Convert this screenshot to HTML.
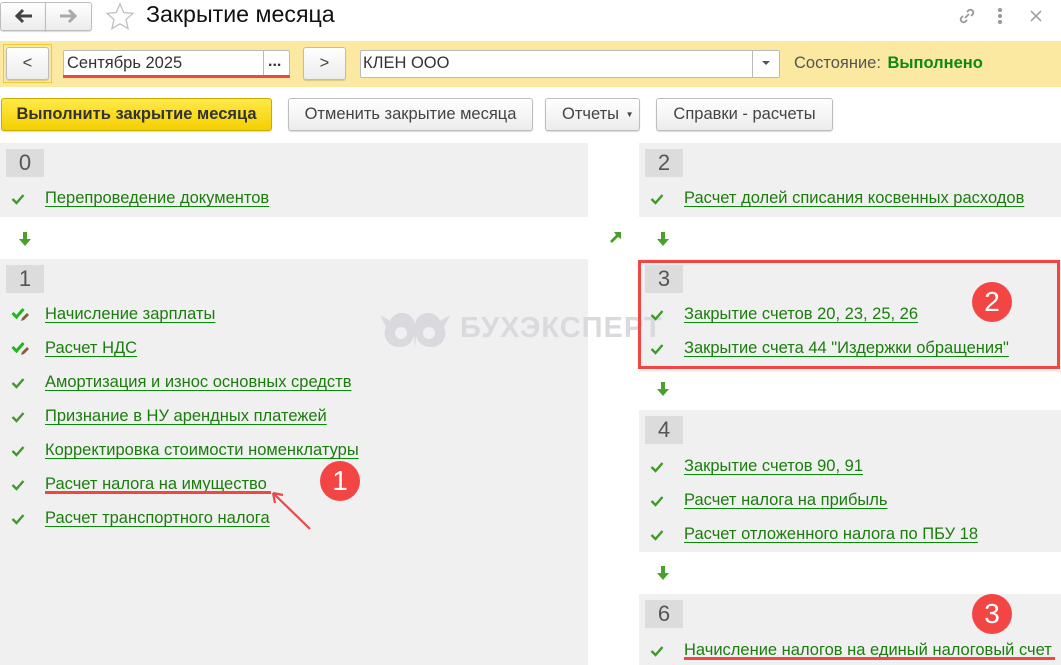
<!DOCTYPE html>
<html><head><meta charset="utf-8"><style>
*{box-sizing:border-box;margin:0;padding:0}
body{width:1061px;height:665px;background:#fff;font-family:"Liberation Sans",Arial,sans-serif;position:relative;overflow:hidden;color:#333}
.a{position:absolute}
.btn{position:absolute;border:1px solid #bdbdbd;border-radius:3px;background:linear-gradient(#fff,#ececec);box-shadow:0 1px 1px rgba(0,0,0,.15);font-size:16.5px;color:#444;text-align:center;white-space:nowrap}
.gray{position:absolute;background:#f0f0f0}
.num{position:absolute;width:38px;height:28px;background:#dcdcdc;color:#555;font-size:22px;line-height:28px;text-align:center}
.lk{position:absolute;font-size:16.5px;color:#1b7d0e;text-decoration:underline;text-decoration-color:#0a8a0a;text-underline-offset:3px;white-space:nowrap;line-height:19px}
.ck{position:absolute;width:14px;height:12px}
.arr{position:absolute;width:12px;height:14px}
.badge{position:absolute;width:40px;height:40px;border-radius:50%;background:#f44545;color:#fff;font-size:28px;line-height:40px;text-align:center}
</style></head><body>

<div class="btn" style="left:0;top:2px;width:46px;height:29px;border-radius:3px 0 0 3px"></div>
<div class="btn" style="left:45px;top:2px;width:47px;height:29px;border-radius:0 3px 3px 0"></div>
<svg class="a" style="left:14px;top:8px" width="20" height="16"><path d="M2 8h16M9 2L3 8l6 6" stroke="#444" stroke-width="3" fill="none"/></svg>
<svg class="a" style="left:58px;top:8px" width="20" height="16"><path d="M2 8h16M11 2l6 6-6 6" stroke="#aaa" stroke-width="3" fill="none"/></svg>
<svg class="a" style="left:105px;top:2px" width="30" height="28"><path d="M15 2l3.8 8.6 9.2.8-7 6.1 2.1 9.1L15 21.8 6.9 26.6 9 17.5 2 11.4l9.2-.8z" fill="none" stroke="#bbb" stroke-width="1.2"/></svg>
<div class="a" style="left:146px;top:1px;font-size:23.2px;color:#111">Закрытие месяца</div>
<svg class="a" style="left:956px;top:5px" width="22" height="22"><g fill="none" stroke="#999" stroke-width="1.8"><path d="M9 13l4-4"/><path d="M7 11l-2 2a3 3 0 004 4l2-2"/><path d="M15 11l2-2a3 3 0 00-4-4l-2 2"/></g></svg>
<svg class="a" style="left:997px;top:7px" width="6" height="18"><circle cx="3" cy="3" r="2" fill="#999"/><circle cx="3" cy="9" r="2" fill="#999"/><circle cx="3" cy="15" r="2" fill="#999"/></svg>
<svg class="a" style="left:1030px;top:10px" width="12" height="12"><path d="M1 1l10 10M11 1L1 11" stroke="#999" stroke-width="1.5"/></svg>

<div class="a" style="left:0;top:41px;width:1061px;height:46px;background:#fbe9a2"></div>
<div class="a" style="left:3px;top:44px;width:49px;height:39px;border:1px solid #f4c830"></div>
<div class="btn" style="left:6px;top:47px;width:43px;height:33px;line-height:30px">&lt;</div>
<div class="a" style="left:63px;top:50px;width:227px;height:28px;background:#fff;border:1px solid #bbb;border-radius:2px"></div>
<div class="a" style="left:263px;top:50px;width:1px;height:28px;background:#bbb"></div>
<div class="a" style="left:67px;top:54px;font-size:16.5px;color:#333">Сентябрь 2025</div>
<div class="a" style="left:268px;top:53px;font-size:16px;color:#333;font-weight:bold">...</div>
<div class="a" style="left:63px;top:75px;width:227px;height:3px;background:#f44545"></div>
<div class="btn" style="left:303px;top:47px;width:43px;height:33px;line-height:30px">&gt;</div>
<div class="a" style="left:360px;top:50px;width:420px;height:28px;background:#fff;border:1px solid #bbb;border-radius:2px"></div>
<div class="a" style="left:752px;top:50px;width:1px;height:28px;background:#bbb"></div>
<div class="a" style="left:363px;top:54px;font-size:16.5px;color:#333">КЛЕН ООО</div>
<svg class="a" style="left:762px;top:61px" width="8" height="5"><path d="M0 0h8L4 4z" fill="#555"/></svg>
<div class="a" style="left:794px;top:54px;font-size:16.5px;color:#555;white-space:nowrap">Состояние: <b style="color:#0d8a0d;margin-left:2px">Выполнено</b></div>

<div class="btn" style="left:1px;top:98px;width:271px;height:33px;line-height:31px;background:linear-gradient(#ffe94a,#f4d000);border-color:#c9ab00;font-weight:bold;color:#333">Выполнить закрытие месяца</div>
<div class="btn" style="left:288px;top:98px;width:245px;height:33px;line-height:31px">Отменить закрытие месяца</div>
<div class="btn" style="left:545px;top:98px;width:95px;height:33px;line-height:31px;text-align:left;padding-left:16px">Отчеты <span style="font-size:8px;position:relative;top:-2px;margin-left:2px">▼</span></div>
<div class="btn" style="left:656px;top:98px;width:177px;height:33px;line-height:31px">Справки - расчеты</div>

<div class="gray" style="left:0;top:143px;width:588px;height:74px"></div>
<div class="gray" style="left:0;top:259px;width:588px;height:406px"></div>
<div class="gray" style="left:639px;top:143px;width:422px;height:74px"></div>
<div class="gray" style="left:639px;top:259px;width:422px;height:113px"></div>
<div class="gray" style="left:639px;top:410px;width:422px;height:142px"></div>
<div class="gray" style="left:639px;top:594px;width:422px;height:71px"></div>

<svg class="a" style="left:380px;top:313px" width="70" height="38"><path d="M0 2l10 6a13 13 0 0125 4a13 13 0 0125-4l10-6-6 12a14 14 0 01-14 20a14 14 0 01-14-12l-1 14-1-14a14 14 0 01-14 12A14 14 0 016 14z" fill="#d9d9de"/><circle cx="21" cy="20" r="6" fill="#f0f0f0"/><circle cx="49" cy="20" r="6" fill="#f0f0f0"/></svg>
<div class="a" style="left:460px;top:312px;font-size:29px;font-weight:bold;color:#d9d9de;letter-spacing:1px">БУХЭКСПЕРТ</div>

<div class="num" style="left:6px;top:149px">0</div>
<div class="num" style="left:6px;top:265px">1</div>
<div class="num" style="left:645px;top:149px">2</div>
<div class="num" style="left:645px;top:265px">3</div>
<div class="num" style="left:645px;top:416px">4</div>
<div class="num" style="left:645px;top:600px">6</div>

<svg width="0" height="0" style="position:absolute"><defs>
<symbol id="c" viewBox="0 0 14 12"><path d="M1.5 6l4 4 7-8" stroke="#3f9a2a" stroke-width="2.4" fill="none"/></symbol>
<symbol id="cp" viewBox="0 0 18 16"><path d="M1.5 6l4 4 7-8" stroke="#22b422" stroke-width="3" fill="none"/><path d="M10 14l1-3 5-5 2 2-5 5z" fill="#8a5a3a"/></symbol>
<symbol id="d" viewBox="0 0 12 14"><path d="M4 0h4v7h4L6 14 0 7h4z" fill="#4aa02a"/></symbol>
</defs></svg>

<div class="lk" style="left:45px;top:189px">Перепроведение документов</div>
<svg class="ck" style="left:11px;top:193px"><use href="#c"/></svg>
<svg class="arr" style="left:19px;top:232px"><use href="#d"/></svg>

<svg class="a" style="left:11px;top:307px" width="18" height="16"><use href="#cp"/></svg>
<div class="lk" style="left:45px;top:305px">Начисление зарплаты</div>
<svg class="a" style="left:11px;top:341px" width="18" height="16"><use href="#cp"/></svg>
<div class="lk" style="left:45px;top:339px">Расчет НДС</div>
<svg class="ck" style="left:11px;top:377px"><use href="#c"/></svg>
<div class="lk" style="left:45px;top:373px">Амортизация и износ основных средств</div>
<svg class="ck" style="left:11px;top:411px"><use href="#c"/></svg>
<div class="lk" style="left:45px;top:407px">Признание в НУ арендных платежей</div>
<svg class="ck" style="left:11px;top:445px"><use href="#c"/></svg>
<div class="lk" style="left:45px;top:441px">Корректировка стоимости номенклатуры</div>
<svg class="ck" style="left:11px;top:479px"><use href="#c"/></svg>
<div class="lk" style="left:45px;top:475px;text-decoration:none">Расчет налога на имущество</div>
<div class="a" style="left:45px;top:491px;width:226px;height:3px;background:#f44545"></div>
<svg class="a" style="left:268px;top:488px" width="46" height="44"><path d="M42 41L5 5M5 5l2 10M5 5l10 2" stroke="#e84a4a" stroke-width="2.2" fill="none"/></svg>
<svg class="ck" style="left:11px;top:513px"><use href="#c"/></svg>
<div class="lk" style="left:45px;top:509px">Расчет транспортного налога</div>
<div class="badge" style="left:320px;top:461px">1</div>

<svg class="a" style="left:608px;top:229px" width="14" height="14"><path d="M2 12l6-6-2-3h7v7l-3-2-6 6z" fill="#4aa02a"/></svg>

<svg class="ck" style="left:650px;top:193px"><use href="#c"/></svg>
<div class="lk" style="left:684px;top:189px">Расчет долей списания косвенных расходов</div>
<svg class="arr" style="left:657px;top:232px"><use href="#d"/></svg>

<div class="a" style="left:638px;top:260px;width:422px;height:109px;border:3px solid #f44545"></div>
<svg class="ck" style="left:650px;top:309px"><use href="#c"/></svg>
<div class="lk" style="left:684px;top:305px">Закрытие счетов 20, 23, 25, 26</div>
<svg class="ck" style="left:650px;top:343px"><use href="#c"/></svg>
<div class="lk" style="left:684px;top:339px">Закрытие счета 44 "Издержки обращения"</div>
<div class="badge" style="left:972px;top:282px">2</div>
<svg class="arr" style="left:657px;top:382px"><use href="#d"/></svg>

<svg class="ck" style="left:650px;top:461px"><use href="#c"/></svg>
<div class="lk" style="left:684px;top:457px">Закрытие счетов 90, 91</div>
<svg class="ck" style="left:650px;top:495px"><use href="#c"/></svg>
<div class="lk" style="left:684px;top:491px">Расчет налога на прибыль</div>
<svg class="ck" style="left:650px;top:529px"><use href="#c"/></svg>
<div class="lk" style="left:684px;top:525px">Расчет отложенного налога по ПБУ 18</div>
<svg class="arr" style="left:657px;top:566px"><use href="#d"/></svg>

<svg class="ck" style="left:650px;top:645px"><use href="#c"/></svg>
<div class="lk" style="left:684px;top:641px;text-decoration:none">Начисление налогов на единый налоговый счет</div>
<div class="a" style="left:684px;top:657px;width:371px;height:3px;background:#f44545"></div>
<div class="badge" style="left:972px;top:594px">3</div>

</body></html>
